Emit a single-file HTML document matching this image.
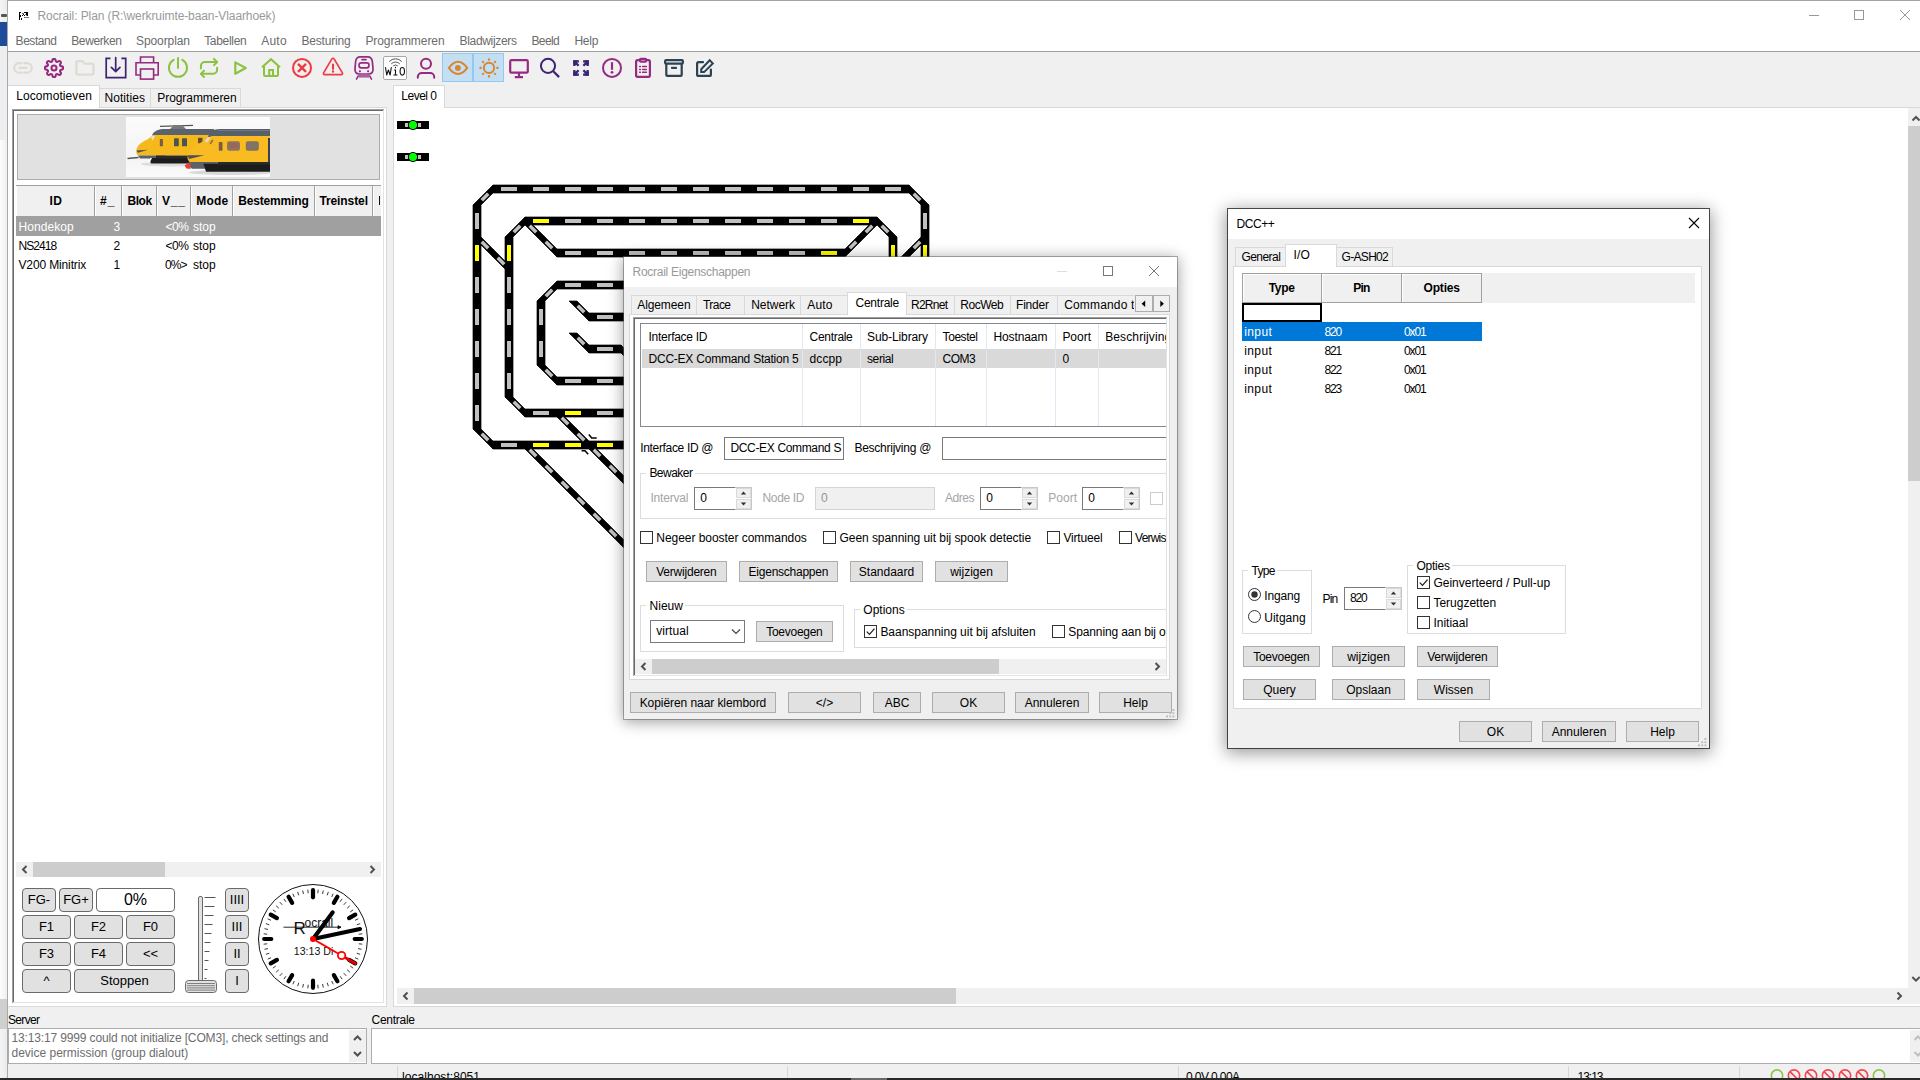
<!DOCTYPE html>
<html><head><meta charset="utf-8"><title>Rocrail</title>
<style>
html,body{margin:0;padding:0}
body{width:1920px;height:1080px;position:relative;overflow:hidden;background:#f0f0f0;font:12px "Liberation Sans",sans-serif;color:#000}
body div,body svg,body span.t{position:absolute}
span.t{white-space:pre}
.b{box-sizing:border-box}
</style></head>
<body>
<div style="left:0px;top:0px;width:8px;height:1078px;background:linear-gradient(90deg,#f4f4f5,#e9eaec);"></div>
<div style="left:0px;top:46px;width:8px;height:94px;background:#eceef0;"></div>
<div style="left:0px;top:140px;width:8px;height:860px;background:linear-gradient(90deg,#fdfdfd,#ededee);"></div>
<div style="left:0px;top:22px;width:7px;height:24px;background:#1d4c9b;"></div>
<div style="left:1px;top:14px;width:6px;height:3px;background:#555;border-radius:1px;"></div>
<div style="left:0px;top:999px;width:7px;height:30px;background:#cfcfcf;"></div>
<div style="left:7px;top:0px;width:1px;height:1078px;background:#a9a9a9;"></div>
<div style="left:8px;top:0px;width:1912px;height:1px;background:#a9a29f;"></div>
<div style="left:8px;top:1px;width:1912px;height:50px;background:#fff;"></div>
<div style="left:8px;top:51px;width:1912px;height:1px;background:#a0a0a0;"></div>
<svg style="left:18px;top:11px" width="12" height="10" viewBox="0 0 12 10" fill="#000"><rect x="1" y="1" width="2" height="1"/><rect x="6" y="1" width="4" height="1"/><rect x="1" y="2" width="1" height="1"/><rect x="4.300000000000001" y="2" width="1.2" height="1"/><rect x="8" y="2" width="2" height="1"/><rect x="1" y="3" width="1" height="1"/><rect x="5" y="3" width="1" height="1"/><rect x="7.5" y="3" width="2.5" height="1"/><rect x="1" y="4" width="2" height="1"/><rect x="4" y="4" width="1" height="1"/><rect x="6" y="4" width="1" height="1"/><rect x="8.5" y="4" width="1.5" height="1"/><rect x="1" y="5" width="2" height="1"/><rect x="1" y="6" width="1" height="1"/><rect x="1" y="7" width="1" height="1"/><rect x="3" y="7" width="1" height="1"/><rect x="1" y="8" width="1" height="1"/><rect x="3" y="8" width="1" height="1"/><rect x="6" y="6" width="5" height="1" fill="#777"/></svg>
<span class="t" id="t0" style="top:8px;line-height:16px;color:#999;left:37.50px;letter-spacing:-0.095px;">Rocrail: Plan (R:\werkruimte-baan-Vlaarhoek)</span>
<span class="t" id="t1" style="top:33px;line-height:16px;color:#6b6b6b;left:15.60px;letter-spacing:-0.458px;">Bestand</span>
<span class="t" id="t2" style="top:33px;line-height:16px;color:#6b6b6b;left:71.25px;letter-spacing:-0.389px;">Bewerken</span>
<span class="t" id="t3" style="top:33px;line-height:16px;color:#6b6b6b;left:136.00px;letter-spacing:-0.090px;">Spoorplan</span>
<span class="t" id="t4" style="top:33px;line-height:16px;color:#6b6b6b;left:204.20px;letter-spacing:-0.315px;">Tabellen</span>
<span class="t" id="t5" style="top:33px;line-height:16px;color:#6b6b6b;left:261.25px;letter-spacing:0.221px;">Auto</span>
<span class="t" id="t6" style="top:33px;line-height:16px;color:#6b6b6b;left:301.50px;letter-spacing:-0.200px;">Besturing</span>
<span class="t" id="t7" style="top:33px;line-height:16px;color:#6b6b6b;left:365.40px;letter-spacing:-0.076px;">Programmeren</span>
<span class="t" id="t8" style="top:33px;line-height:16px;color:#6b6b6b;left:459.60px;letter-spacing:-0.339px;">Bladwijzers</span>
<span class="t" id="t9" style="top:33px;line-height:16px;color:#6b6b6b;left:531.50px;letter-spacing:-0.651px;">Beeld</span>
<span class="t" id="t10" style="top:33px;line-height:16px;color:#6b6b6b;left:574.40px;letter-spacing:-0.196px;">Help</span>
<svg style="left:1800px;top:5px" width="120" height="22" viewBox="0 0 120 22" fill="none" stroke="#999" stroke-width="1"><path d="M9 10.5h10"/><rect x="54.5" y="5.5" width="9" height="9"/><path d="M100 5l10 10M110 5l-10 10"/></svg>
<div style="left:442px;top:53px;width:31px;height:29px;background:#c4def2;border:1px solid #90c8f6;box-sizing:border-box;"></div>
<div style="left:473px;top:53px;width:31px;height:29px;background:#c4def2;border:1px solid #90c8f6;box-sizing:border-box;"></div>
<svg style="left:10px;top:55px" width="26" height="26" viewBox="10 55 26 26" fill="none" stroke="#dedbd2" stroke-width="2.2" stroke-linecap="round" stroke-linejoin="round"><path d="M21.6 63.100H19a4.800 4.800 0 0 0 0 9.600h2.600M24.300 63.100H27a4.800 4.800 0 0 1 0 9.600h-2.700M19.400 67.900h7.300"/></svg>
<svg style="left:44px;top:57.900px" width="20" height="20" viewBox="0 0 24 24" fill="none" stroke="#962a80" stroke-width="2.500" stroke-linecap="round" stroke-linejoin="round"><circle cx="12" cy="12" r="3"/><path d="M19.4 15a1.650 1.650 0 0 0 .33 1.820l.06.06a2 2 0 1 1-2.830 2.830l-.06-.06a1.650 1.650 0 0 0-1.820-.33 1.650 1.650 0 0 0-1 1.510V21a2 2 0 0 1-4 0v-.09A1.650 1.650 0 0 0 9 19.400a1.650 1.650 0 0 0-1.820.33l-.06.06a2 2 0 1 1-2.830-2.830l.06-.06a1.650 1.650 0 0 0 .33-1.820 1.650 1.650 0 0 0-1.510-1H3a2 2 0 0 1 0-4h.09A1.650 1.650 0 0 0 4.600 9a1.650 1.650 0 0 0-.33-1.820l-.06-.06a2 2 0 1 1 2.830-2.830l.06.06a1.650 1.650 0 0 0 1.820.33H9a1.650 1.650 0 0 0 1-1.510V3a2 2 0 0 1 4 0v.09a1.650 1.650 0 0 0 1 1.510 1.650 1.650 0 0 0 1.820-.33l.06-.06a2 2 0 1 1 2.830 2.830l-.06.06a1.650 1.650 0 0 0-.33 1.820V9a1.650 1.650 0 0 0 1.510 1H21a2 2 0 0 1 0 4h-.09a1.650 1.650 0 0 0-1.510 1z"/></svg>
<svg style="left:72px;top:55px" width="26" height="26" viewBox="72 55 26 26" fill="none" stroke="#dedbd2" stroke-width="2.2" stroke-linecap="round" stroke-linejoin="round"><path d="M76.400 62.600a1.500 1.500 0 0 1 1.500-1.500h4.300l2.200 2.500h7.600a1.500 1.500 0 0 1 1.500 1.500v8a1.500 1.500 0 0 1-1.500 1.500H77.900a1.500 1.500 0 0 1-1.500-1.500z"/></svg>
<svg style="left:103px;top:55px" width="26" height="26" viewBox="103 55 26 26" fill="none" stroke="#3c2373" stroke-width="1.7" stroke-linecap="round" stroke-linejoin="round"><path d="M110.500 58.400h-4.300v19.200h19.500V58.400h-4.300" stroke-linejoin="miter" stroke-linecap="butt"/><path d="M115.700 57.700v13.500M111.400 67.400l4.300 4.200 4.300-4.200"/></svg>
<svg style="left:134px;top:55px" width="26" height="26" viewBox="134 55 26 26" fill="none" stroke="#962a80" stroke-width="1.6" stroke-linecap="round" stroke-linejoin="round"><g stroke-linejoin="miter" stroke-linecap="butt"><path d="M140.500 62.800V57h13.100v5.800"/><path d="M140.500 75H136V62.800h22.200V75h-4.600"/><rect x="140.500" y="69" width="13.100" height="10.100"/></g></svg>
<svg style="left:165px;top:55px" width="26" height="26" viewBox="165 55 26 26" fill="none" stroke="#8bc340" stroke-width="2" stroke-linecap="round" stroke-linejoin="round"><path d="M173.700 59.800a9.050 9.050 0 1 0 8.600 0"/><path d="M178 58.100v10"/></svg>
<svg style="left:196px;top:55px" width="26" height="26" viewBox="196 55 26 26" fill="none" stroke="#8bc340" stroke-width="2" stroke-linecap="round" stroke-linejoin="round"><path d="M214 58.900l3.100 3.100-3.100 3.100"/><path d="M200.900 68.400V66a4 4 0 0 1 4-4h12"/><path d="M204 77l-3.100-3.100 3.100-3.100"/><path d="M217.100 67.800v2a4 4 0 0 1-4 4h-12"/></svg>
<svg style="left:227px;top:55px" width="26" height="26" viewBox="227 55 26 26" fill="none" stroke="#8bc340" stroke-width="2.2" stroke-linecap="round" stroke-linejoin="round"><path d="M235.300 62.400l10.500 5.600-10.500 5.700z"/></svg>
<svg style="left:258px;top:55px" width="26" height="26" viewBox="258 55 26 26" fill="none" stroke="#8bc340" stroke-width="2" stroke-linecap="round" stroke-linejoin="round"><path d="M262 67.200l9-8 9 8" stroke-linecap="butt" stroke-linejoin="miter"/><path d="M264 66v9a1 1 0 0 0 1 1h12a1 1 0 0 0 1-1v-9"/><path d="M269.200 75.500v-5.400h3.800v5.400" stroke-linejoin="miter"/></svg>
<svg style="left:289px;top:55px" width="26" height="26" viewBox="289 55 26 26" fill="none" stroke="#ef3a42" stroke-width="2" stroke-linecap="round" stroke-linejoin="round"><circle cx="302" cy="67.900" r="9"/><path d="M298 63.900l8 8M306 63.900l-8 8" stroke-width="2.300" stroke-linecap="butt"/></svg>
<svg style="left:320px;top:55px" width="26" height="26" viewBox="320 55 26 26" fill="none" stroke="#ef3a42" stroke-width="1.7" stroke-linecap="round" stroke-linejoin="round"><path d="M331.900 58.900L323.600 72.900a1.200 1.200 0 0 0 1 1.800h16.800a1.200 1.200 0 0 0 1-1.800L334.100 58.900a1.250 1.250 0 0 0-2.200 0z"/><path d="M333 63.700v6" stroke-width="2.100" stroke-linecap="butt"/><path d="M333 71.500v.2" stroke-width="2.300"/></svg>
<svg style="left:351px;top:55px" width="26" height="26" viewBox="351 55 26 26" fill="none" stroke="#962a80" stroke-width="1.7" stroke-linecap="round" stroke-linejoin="round"><path d="M360.300 56.800h7.400c3.500 0 4.400 2 4.700 5l.6 7.200c.2 3-1.200 5-4.300 5h-9.400c-3.100 0-4.500-2-4.300-5l.6-7.200c.3-3 1.200-5 4.700-5z"/><rect x="359.100" y="62.800" width="9.800" height="5" rx="2"/><path d="M362 59.600h4"/><path d="M359.900 71.300v.01M368.100 71.300v.01" stroke-width="2.200"/><path d="M358.300 75.800l-1.800 3.400M369.700 75.800l1.800 3.400" stroke-width="1.500"/><path d="M358.300 75h11.400v2.600h-11.400z" fill="#a860a0" stroke="none"/></svg>
<svg style="left:383px;top:56px" width="24" height="24" viewBox="383 56 24 24"><rect x="383.500" y="56.500" width="23" height="23" rx="1.500" fill="#fff" stroke="#a8a8a8"/><g fill="none" stroke="#555" stroke-width="1" stroke-linecap="round"><path d="M389.500 61.300a8 8 0 0 1 12 0"/><path d="M391.500 63.600a5.500 5.500 0 0 1 8 0"/><path d="M393.500 65.700a3 3 0 0 1 4 0"/></g><g fill="none" stroke="#111" stroke-width="1.100" stroke-linejoin="round" stroke-linecap="round"><path d="M385.500 67.500l1.200 7.500 1.700-5 1.700 5 1.200-7.500"/><path d="M394.500 70h1v5M393.800 75h3.200M395.500 67.200v.5"/><ellipse cx="402.300" cy="71.300" rx="2.200" ry="3.800"/></g></svg>
<svg style="left:413px;top:55px" width="26" height="26" viewBox="413 55 26 26" fill="none" stroke="#962a80" stroke-width="2" stroke-linecap="round" stroke-linejoin="round"><path d="M417.800 77.700v-.7a4 4 0 0 1 4-4h8.400a4 4 0 0 1 4 4v.7"/><circle cx="426" cy="63.850" r="5"/></svg>
<svg style="left:444px;top:55px" width="26" height="26" viewBox="444 55 26 26" fill="none" stroke="#d8862e" stroke-width="2" stroke-linecap="round" stroke-linejoin="round"><path d="M448.900 67.900c3-4.300 6-6.100 9.100-6.100s6.200 1.800 9.200 6.100c-3 4.300-6.100 6.100-9.200 6.100s-6.100-1.800-9.100-6.100z" stroke-linejoin="miter"/><circle cx="457.900" cy="67.900" r="2.900" fill="#d8862e" stroke="none"/></svg>
<svg style="left:475px;top:55px" width="26" height="26" viewBox="475 55 26 26" fill="none" stroke="#d8862e" stroke-width="2" stroke-linecap="round" stroke-linejoin="round"><circle cx="489" cy="67.900" r="5.100"/><path d="M496.40 67.90L498.50 67.90M494.23 73.13L495.72 74.62M489.00 75.30L489.00 77.40M483.77 73.13L482.28 74.62M481.60 67.90L479.50 67.90M483.77 62.67L482.28 61.18M489.00 60.50L489.00 58.40M494.23 62.67L495.72 61.18" stroke-linecap="butt" stroke-width="2.100"/></svg>
<svg style="left:506px;top:55px" width="26" height="26" viewBox="506 55 26 26" fill="none" stroke="#962a80" stroke-width="2.2" stroke-linecap="round" stroke-linejoin="round"><rect x="510.200" y="60.200" width="17.600" height="12.500" rx="1.300"/><path d="M519 73v3.800M514.800 77.100h8.200" stroke-linecap="butt"/></svg>
<svg style="left:537px;top:55px" width="26" height="26" viewBox="537 55 26 26" fill="none" stroke="#3c2373" stroke-width="2" stroke-linecap="round" stroke-linejoin="round"><circle cx="548" cy="65.850" r="7.050"/><path d="M553.300 71.300l5.800 5.800" stroke-linecap="butt" stroke-width="2.200"/></svg>
<svg style="left:568px;top:55px" width="26" height="26" viewBox="568 55 26 26" fill="none" stroke="#3c2373" stroke-width="2" stroke-linecap="round" stroke-linejoin="round"><g stroke-linecap="butt" stroke-linejoin="miter" stroke-width="2.300"><path d="M574.350 66v-4.550h4.550M574.800 61.900l3.800 3.800M587.650 66v-4.550h-4.550M587.200 61.900l-3.800 3.800M574.350 70v4.550h4.550M574.800 74.100l3.800-3.800M587.650 70v4.550h-4.550M587.200 74.100l-3.800-3.800"/></g><path d="M573.200 60.300h4.500l-4.500 4.500zM588.800 60.300h-4.500l4.500 4.500zM573.200 75.700h4.500l-4.500-4.500zM588.800 75.700h-4.500l4.500-4.500z" fill="#3c2373" stroke="none"/></svg>
<svg style="left:599px;top:55px" width="26" height="26" viewBox="599 55 26 26" fill="none" stroke="#962a80" stroke-width="2" stroke-linecap="round" stroke-linejoin="round"><circle cx="612" cy="67.900" r="9"/><path d="M612 62.200v7.600" stroke-width="2.200" stroke-linecap="butt"/><path d="M612 72.300v.01" stroke-width="2.800"/></svg>
<svg style="left:630px;top:55px" width="26" height="26" viewBox="630 55 26 26" fill="none" stroke="#962a80" stroke-width="2.2" stroke-linecap="round" stroke-linejoin="round"><path d="M647 60.200h1.400a1.500 1.500 0 0 1 1.500 1.500v13.600a1.500 1.500 0 0 1-1.500 1.500h-10.800a1.500 1.500 0 0 1-1.500-1.500V61.700a1.500 1.500 0 0 1 1.500-1.500H639"/><rect x="640" y="58.900" width="6.100" height="2.700" rx=".8"/><path d="M639.600 66.400h.8M639.600 69.400h.8M639.600 72.300h.8M642.600 66.400h3.800M642.600 69.400h3.800M642.600 72.300h3.800" stroke-width="1.500"/></svg>
<svg style="left:661px;top:55px" width="26" height="26" viewBox="661 55 26 26" fill="none" stroke="#2b4352" stroke-width="2.2" stroke-linecap="round" stroke-linejoin="round"><rect x="665.100" y="60.200" width="17.800" height="3.500" rx="1"/><path d="M666.300 64.200v10.700a1 1 0 0 0 1 1h13.400a1 1 0 0 0 1-1V64.200"/><path d="M671.100 67.900h5.800" stroke-linecap="butt"/></svg>
<svg style="left:692px;top:55px" width="26" height="26" viewBox="692 55 26 26" fill="none" stroke="#2b4352" stroke-width="2.2" stroke-linecap="round" stroke-linejoin="round"><path d="M703 62.200h-4.400a1.500 1.500 0 0 0-1.500 1.500v10.700a1.500 1.500 0 0 0 1.500 1.500h10.800a1.500 1.500 0 0 0 1.500-1.500v-4.900" /><path d="M709.700 60.300l3.100 3.100-8.700 8.700h-2.900v-2.900z" stroke-linejoin="miter" stroke-width="2"/></svg>
<div style="left:8px;top:107px;width:379px;height:900px;background:#fff;border:1px solid #d9d9d9;box-sizing:border-box;border-left:none;"></div>
<div style="left:99px;top:88px;width:52px;height:20px;background:#f0f0f0;border:1px solid #d9d9d9;box-sizing:border-box;"></div>
<div style="left:150px;top:88px;width:91px;height:20px;background:#f0f0f0;border:1px solid #d9d9d9;box-sizing:border-box;"></div>
<div style="left:8px;top:85px;width:92px;height:23px;background:#fff;border:1px solid #d9d9d9;box-sizing:border-box;border-bottom:none;border-left:none;"></div>
<span class="t" id="t11" style="top:88px;line-height:16px;left:16.25px;letter-spacing:0.080px;">Locomotieven</span>
<span class="t" id="t12" style="top:90px;line-height:16px;left:104.40px;letter-spacing:0.083px;">Notities</span>
<span class="t" id="t13" style="top:90px;line-height:16px;left:157.25px;letter-spacing:-0.057px;">Programmeren</span>
<div style="left:12px;top:109px;width:373px;height:895px;background:#fff;"></div>
<div style="left:12px;top:109px;width:372px;height:894px;background:#a0a0a0;"></div>
<div style="left:13px;top:110px;width:371px;height:893px;background:#e3e3e3;"></div>
<div style="left:13px;top:110px;width:370px;height:892px;background:#696969;"></div>
<div style="left:14px;top:111px;width:369px;height:891px;background:#fff;"></div>
<div style="left:17px;top:114px;width:363px;height:66px;background:#e1e1e1;border:1px solid #adadad;box-sizing:border-box;"></div>
<svg style="left:126px;top:117px" width="144" height="60" viewBox="0 0 144 60">
<defs><linearGradient id="bgI" x1="0" y1="0" x2="0" y2="1"><stop offset="0" stop-color="#fbfbfb"/><stop offset=".7" stop-color="#f4f4f4"/><stop offset="1" stop-color="#fafafa"/></linearGradient>
<filter id="bl"><feGaussianBlur stdDeviation=".45"/></filter></defs>
<rect width="144" height="60" fill="url(#bgI)"/>
<g filter="url(#bl)">
<ellipse cx="45" cy="47" rx="30" ry="2.500" fill="#ddd"/><ellipse cx="105" cy="55.500" rx="42" ry="2.500" fill="#d8d8d8"/>
<!-- back train -->
<path d="M34 9.300L67 8.300" stroke="#5a5548" stroke-width="1.200"/><path d="M44 12l4-4h8l4 4z" fill="#777a7c"/>
<path d="M26 18.500c1-4 6-6.500 12-6.500h50v7z" fill="#5c646d"/>
<path d="M10.300 34c0-5 5-9 11-11.500l6-4.500h60v20.500H12c-1.500-1-1.700-3-1.700-4.500z" fill="#f6b91f"/>
<path d="M10.500 33.500l11.500-.7-10 3z" fill="#4a5058"/>
<path d="M12 38.500h28l-2 3H14z" fill="#5a6068"/><path d="M23 41h44v5.500H25z" fill="#1e1e1e"/><path d="M30 38.500h38v3H30z" fill="#2a2a2a"/>
<path d="M1.500 41.500l11-1" stroke="#555" stroke-width="1.300"/><path d="M21 45l3-4h2l-2 4z" fill="#fff"/>
<rect x="33.800" y="22" width="3.100" height="7.200" rx=".5" fill="#7a5a46"/><rect x="48" y="21.300" width="4.800" height="8" rx=".5" fill="#4a5450"/><rect x="56" y="21.300" width="5" height="8" rx=".5" fill="#4a5450"/><rect x="72" y="20.800" width="4.500" height="5.500" fill="#6a4a38"/>
<path d="M25 20l2.500-1.500 1.500 1-2.500 4z" fill="#e8e4d8"/>
<!-- front train -->
<path d="M82 20c1-5 5-8 12-8h50v9z" fill="#59616b"/><path d="M92 13.500h52" stroke="#747c86" stroke-width=".8"/>
<path d="M61.500 40c0-5 3-9 10-12l10.500-7.500 4-1.500h58v26H63.500c-1.500-1.500-2-3-2-5z" fill="#f8bc20"/>
<path d="M142 21h2v25h-2z" fill="#3a4048"/>
<path d="M61.500 38.300h17l-15.500 3.700z" fill="#4a5058"/>
<path d="M62.500 45h30l-3 6.700H66c-2.500-1.500-3.500-4-3.500-6.700z" fill="#5b6068"/>
<path d="M77.500 46.700H144v8H80z" fill="#1c1c1c"/><path d="M92 45h52v2.500H92z" fill="#2b2b2b"/>
<path d="M58.500 48.500l4-2.500 3 1.500-1.500 2 .5 2.500-4-.5z" fill="#e7413b"/>
<rect x="92.800" y="25" width="3.700" height="8.800" rx=".8" fill="#7b5b40"/>
<rect x="101" y="24.200" width="13" height="9.500" rx="2.200" fill="#8d7463"/><rect x="119.800" y="24.200" width="13" height="9.500" rx="2.200" fill="#86705f"/>
<path d="M103 26h9v5h-9z" fill="#a05a48" opacity=".5"/><path d="M122 26h9v5h-9z" fill="#7a7a78" opacity=".5"/>
<path d="M78.500 24l3.500-4 2.500.5-3 5z" fill="#ded9cc"/><path d="M83.500 26.500l2.500-4 1.500.8-2.500 4.200z" fill="#9c6b4a"/>
</g></svg>
<div style="left:16px;top:185px;width:365px;height:32px;background:#f0f0f0;"></div>
<div style="left:16px;top:185px;width:365px;height:1px;background:#a0a0a0;"></div>
<div style="left:16px;top:216px;width:365px;height:1px;background:#a0a0a0;"></div>
<div style="left:94px;top:186px;width:1px;height:30px;background:#a0a0a0;"></div>
<div style="left:95px;top:186px;width:1px;height:30px;background:#fff;"></div>
<div style="left:121px;top:186px;width:1px;height:30px;background:#a0a0a0;"></div>
<div style="left:122px;top:186px;width:1px;height:30px;background:#fff;"></div>
<div style="left:156px;top:186px;width:1px;height:30px;background:#a0a0a0;"></div>
<div style="left:157px;top:186px;width:1px;height:30px;background:#fff;"></div>
<div style="left:190px;top:186px;width:1px;height:30px;background:#a0a0a0;"></div>
<div style="left:191px;top:186px;width:1px;height:30px;background:#fff;"></div>
<div style="left:232px;top:186px;width:1px;height:30px;background:#a0a0a0;"></div>
<div style="left:233px;top:186px;width:1px;height:30px;background:#fff;"></div>
<div style="left:314px;top:186px;width:1px;height:30px;background:#a0a0a0;"></div>
<div style="left:315px;top:186px;width:1px;height:30px;background:#fff;"></div>
<div style="left:372px;top:186px;width:1px;height:30px;background:#a0a0a0;"></div>
<div style="left:373px;top:186px;width:1px;height:30px;background:#fff;"></div>
<div style="left:16px;top:186px;width:1px;height:30px;background:#fff;"></div>
<span class="t" id="t14" style="top:193px;line-height:16px;font-weight:bold;left:49.40px;letter-spacing:0.500px;">ID</span>
<span class="t" id="t15" style="top:193px;line-height:16px;font-weight:bold;left:100.00px;letter-spacing:1.200px;">#_</span>
<span class="t" id="t16" style="top:193px;line-height:16px;font-weight:bold;left:127.50px;letter-spacing:-0.472px;">Blok</span>
<span class="t" id="t17" style="top:193px;line-height:16px;font-weight:bold;left:161.90px;letter-spacing:0.870px;">V__</span>
<span class="t" id="t18" style="top:193px;line-height:16px;font-weight:bold;left:196.25px;letter-spacing:0.169px;">Mode</span>
<span class="t" id="t19" style="top:193px;line-height:16px;font-weight:bold;left:238.30px;letter-spacing:-0.176px;">Bestemming</span>
<span class="t" id="t20" style="top:193px;line-height:16px;font-weight:bold;left:319.40px;letter-spacing:-0.095px;">Treinstel</span>
<div style="left:378.5px;top:196.3px;width:1.8px;height:8.7px;background:#111;"></div>
<div style="left:16px;top:216px;width:365px;height:20px;background:#a0a0a0;"></div>
<span class="t" id="t21" style="top:219px;line-height:16px;color:#fff;left:18.50px;letter-spacing:0.076px;">Hondekop</span>
<span class="t" id="t22" style="top:219px;line-height:16px;color:#fff;left:113.61px;">3</span>
<span class="t" id="t23" style="top:219px;line-height:16px;color:#fff;left:165.60px;letter-spacing:-0.480px;">&lt;0%</span>
<span class="t" id="t24" style="top:219px;line-height:16px;color:#fff;left:193.00px;letter-spacing:-0.029px;">stop</span>
<span class="t" id="t25" style="top:238px;line-height:16px;left:18.50px;letter-spacing:-0.955px;">NS2418</span>
<span class="t" id="t26" style="top:238px;line-height:16px;left:113.61px;">2</span>
<span class="t" id="t27" style="top:238px;line-height:16px;left:165.60px;letter-spacing:-0.480px;">&lt;0%</span>
<span class="t" id="t28" style="top:238px;line-height:16px;left:193.00px;letter-spacing:-0.029px;">stop</span>
<span class="t" id="t29" style="top:257px;line-height:16px;left:18.50px;letter-spacing:-0.134px;">V200 Minitrix</span>
<span class="t" id="t30" style="top:257px;line-height:16px;left:113.61px;">1</span>
<span class="t" id="t31" style="top:257px;line-height:16px;left:165.00px;letter-spacing:-0.930px;">0%&gt;</span>
<span class="t" id="t32" style="top:257px;line-height:16px;left:193.00px;letter-spacing:-0.029px;">stop</span>
<div style="left:16px;top:862px;width:365px;height:15px;background:#f0f0f0;"></div>
<div style="left:33px;top:862px;width:132px;height:15px;background:#cdcdcd;"></div>
<svg style="left:16px;top:862px" width="365" height="15" fill="none" stroke="#505050" stroke-width="2"><path d="M10.5 4.0l-3.500 3.500 3.500 3.500M354.5 4.0l3.500 3.500-3.500 3.500"/></svg>
<div style="left:22px;top:888px;width:34px;height:24px;background:#e1e1e1;border:1px solid #6a6a6a;box-sizing:border-box;border-radius:4px;"></div>
<span class="t" id="t33" style="top:891px;line-height:17px;font-size:13px;left:27.80px;">FG-</span>
<div style="left:59px;top:888px;width:34px;height:24px;background:#e1e1e1;border:1px solid #6a6a6a;box-sizing:border-box;border-radius:4px;"></div>
<span class="t" id="t34" style="top:891px;line-height:17px;font-size:13px;left:63.17px;">FG+</span>
<div style="left:96px;top:888px;width:79px;height:24px;background:#fff;border:1px solid #6a6a6a;box-sizing:border-box;border-radius:4px;"></div>
<span class="t" id="t35" style="top:889px;line-height:21px;font-size:16px;left:123.94px;">0%</span>
<div style="left:22px;top:915px;width:49px;height:24px;background:#e1e1e1;border:1px solid #6a6a6a;box-sizing:border-box;border-radius:4px;"></div>
<span class="t" id="t36" style="top:918px;line-height:17px;font-size:13px;left:38.91px;">F1</span>
<div style="left:74px;top:915px;width:49px;height:24px;background:#e1e1e1;border:1px solid #6a6a6a;box-sizing:border-box;border-radius:4px;"></div>
<span class="t" id="t37" style="top:918px;line-height:17px;font-size:13px;left:90.91px;">F2</span>
<div style="left:126px;top:915px;width:49px;height:24px;background:#e1e1e1;border:1px solid #6a6a6a;box-sizing:border-box;border-radius:4px;"></div>
<span class="t" id="t38" style="top:918px;line-height:17px;font-size:13px;left:142.91px;">F0</span>
<div style="left:22px;top:942px;width:49px;height:24px;background:#e1e1e1;border:1px solid #6a6a6a;box-sizing:border-box;border-radius:4px;"></div>
<span class="t" id="t39" style="top:945px;line-height:17px;font-size:13px;left:38.91px;">F3</span>
<div style="left:74px;top:942px;width:49px;height:24px;background:#e1e1e1;border:1px solid #6a6a6a;box-sizing:border-box;border-radius:4px;"></div>
<span class="t" id="t40" style="top:945px;line-height:17px;font-size:13px;left:90.91px;">F4</span>
<div style="left:126px;top:942px;width:49px;height:24px;background:#e1e1e1;border:1px solid #6a6a6a;box-sizing:border-box;border-radius:4px;"></div>
<span class="t" id="t41" style="top:945px;line-height:17px;font-size:13px;left:142.91px;">&lt;&lt;</span>
<div style="left:22px;top:969px;width:49px;height:24px;background:#e1e1e1;border:1px solid #6a6a6a;box-sizing:border-box;border-radius:4px;"></div>
<span class="t" id="t42" style="top:972px;line-height:17px;font-size:13px;left:43.45px;">^</span>
<div style="left:74px;top:969px;width:101px;height:24px;background:#e1e1e1;border:1px solid #6a6a6a;box-sizing:border-box;border-radius:4px;"></div>
<span class="t" id="t43" style="top:972px;line-height:17px;font-size:13px;left:100.28px;">Stoppen</span>
<div style="left:225px;top:888px;width:24px;height:24px;background:#e1e1e1;border:1px solid #6a6a6a;box-sizing:border-box;border-radius:4px;"></div>
<span class="t" id="t44" style="top:891px;line-height:17px;font-size:13px;left:229.77px;">IIII</span>
<div style="left:225px;top:915px;width:24px;height:24px;background:#e1e1e1;border:1px solid #6a6a6a;box-sizing:border-box;border-radius:4px;"></div>
<span class="t" id="t45" style="top:918px;line-height:17px;font-size:13px;left:231.58px;">III</span>
<div style="left:225px;top:942px;width:24px;height:24px;background:#e1e1e1;border:1px solid #6a6a6a;box-sizing:border-box;border-radius:4px;"></div>
<span class="t" id="t46" style="top:945px;line-height:17px;font-size:13px;left:233.38px;">II</span>
<div style="left:225px;top:969px;width:24px;height:24px;background:#e1e1e1;border:1px solid #6a6a6a;box-sizing:border-box;border-radius:4px;"></div>
<span class="t" id="t47" style="top:972px;line-height:17px;font-size:13px;left:235.19px;">I</span>
<svg style="left:184px;top:894px" width="36" height="100" viewBox="184 894 36 100"><rect x="198.500" y="896.500" width="4" height="85" rx="1.500" fill="#e1e1e1" stroke="#6a6a6a"/><path d="M204.500 897.5h11.0" stroke="#555" stroke-width="1"/><path d="M204.500 906.5h10.0" stroke="#555" stroke-width="1"/><path d="M204.500 915.5h9.0" stroke="#555" stroke-width="1"/><path d="M204.500 924.5h8.0" stroke="#555" stroke-width="1"/><path d="M204.500 933.5h7.0" stroke="#555" stroke-width="1"/><path d="M204.500 942.5h6.0" stroke="#555" stroke-width="1"/><path d="M204.500 951.5h5.0" stroke="#555" stroke-width="1"/><path d="M204.500 960.5h4.0" stroke="#555" stroke-width="1"/><path d="M204.500 969.5h3.0" stroke="#555" stroke-width="1"/><path d="M204.500 978.5h2.0" stroke="#555" stroke-width="1"/><rect x="185.500" y="980.500" width="31" height="12" rx="3" fill="#e1e1e1" stroke="#6a6a6a"/><path d="M187 983.5h28" stroke="#666" stroke-width=".8"/><path d="M187 985.7h28" stroke="#666" stroke-width=".8"/><path d="M187 987.9h28" stroke="#666" stroke-width=".8"/><path d="M187 990.1h28" stroke="#666" stroke-width=".8"/></svg>
<svg style="left:256px;top:882px" width="114" height="114" viewBox="256 882 114 114"><circle cx="313" cy="939" r="54.5" fill="#fff" stroke="#111" stroke-width="1"/><path d="M313.00 897.30L313.00 890.20" stroke="#000" stroke-width="4.200" stroke-linecap="round"/><path d="M317.81 893.25L318.18 889.67" stroke="#222" stroke-width=".9"/><path d="M322.56 894.01L323.31 890.48" stroke="#222" stroke-width=".9"/><path d="M327.21 895.25L328.33 891.83" stroke="#222" stroke-width=".9"/><path d="M331.71 896.98L333.17 893.69" stroke="#222" stroke-width=".9"/><path d="M333.85 902.89L337.40 896.74" stroke="#000" stroke-width="4.200" stroke-linecap="round"/><path d="M340.04 901.79L342.15 898.87" stroke="#222" stroke-width=".9"/><path d="M343.78 904.82L346.19 902.14" stroke="#222" stroke-width=".9"/><path d="M347.18 908.22L349.86 905.81" stroke="#222" stroke-width=".9"/><path d="M350.21 911.96L353.13 909.85" stroke="#222" stroke-width=".9"/><path d="M349.11 918.15L355.26 914.60" stroke="#000" stroke-width="4.200" stroke-linecap="round"/><path d="M355.02 920.29L358.31 918.83" stroke="#222" stroke-width=".9"/><path d="M356.75 924.79L360.17 923.67" stroke="#222" stroke-width=".9"/><path d="M357.99 929.44L361.52 928.69" stroke="#222" stroke-width=".9"/><path d="M358.75 934.19L362.33 933.82" stroke="#222" stroke-width=".9"/><path d="M354.70 939.00L361.80 939.00" stroke="#000" stroke-width="4.200" stroke-linecap="round"/><path d="M358.75 943.81L362.33 944.18" stroke="#222" stroke-width=".9"/><path d="M357.99 948.56L361.52 949.31" stroke="#222" stroke-width=".9"/><path d="M356.75 953.21L360.17 954.33" stroke="#222" stroke-width=".9"/><path d="M355.02 957.71L358.31 959.17" stroke="#222" stroke-width=".9"/><path d="M349.11 959.85L355.26 963.40" stroke="#000" stroke-width="4.200" stroke-linecap="round"/><path d="M350.21 966.04L353.13 968.15" stroke="#222" stroke-width=".9"/><path d="M347.18 969.78L349.86 972.19" stroke="#222" stroke-width=".9"/><path d="M343.78 973.18L346.19 975.86" stroke="#222" stroke-width=".9"/><path d="M340.04 976.21L342.15 979.13" stroke="#222" stroke-width=".9"/><path d="M333.85 975.11L337.40 981.26" stroke="#000" stroke-width="4.200" stroke-linecap="round"/><path d="M331.71 981.02L333.17 984.31" stroke="#222" stroke-width=".9"/><path d="M327.21 982.75L328.33 986.17" stroke="#222" stroke-width=".9"/><path d="M322.56 983.99L323.31 987.52" stroke="#222" stroke-width=".9"/><path d="M317.81 984.75L318.18 988.33" stroke="#222" stroke-width=".9"/><path d="M313.00 980.70L313.00 987.80" stroke="#000" stroke-width="4.200" stroke-linecap="round"/><path d="M308.19 984.75L307.82 988.33" stroke="#222" stroke-width=".9"/><path d="M303.44 983.99L302.69 987.52" stroke="#222" stroke-width=".9"/><path d="M298.79 982.75L297.67 986.17" stroke="#222" stroke-width=".9"/><path d="M294.29 981.02L292.83 984.31" stroke="#222" stroke-width=".9"/><path d="M292.15 975.11L288.60 981.26" stroke="#000" stroke-width="4.200" stroke-linecap="round"/><path d="M285.96 976.21L283.85 979.13" stroke="#222" stroke-width=".9"/><path d="M282.22 973.18L279.81 975.86" stroke="#222" stroke-width=".9"/><path d="M278.82 969.78L276.14 972.19" stroke="#222" stroke-width=".9"/><path d="M275.79 966.04L272.87 968.15" stroke="#222" stroke-width=".9"/><path d="M276.89 959.85L270.74 963.40" stroke="#000" stroke-width="4.200" stroke-linecap="round"/><path d="M270.98 957.71L267.69 959.17" stroke="#222" stroke-width=".9"/><path d="M269.25 953.21L265.83 954.33" stroke="#222" stroke-width=".9"/><path d="M268.01 948.56L264.48 949.31" stroke="#222" stroke-width=".9"/><path d="M267.25 943.81L263.67 944.18" stroke="#222" stroke-width=".9"/><path d="M271.30 939.00L264.20 939.00" stroke="#000" stroke-width="4.200" stroke-linecap="round"/><path d="M267.25 934.19L263.67 933.82" stroke="#222" stroke-width=".9"/><path d="M268.01 929.44L264.48 928.69" stroke="#222" stroke-width=".9"/><path d="M269.25 924.79L265.83 923.67" stroke="#222" stroke-width=".9"/><path d="M270.98 920.29L267.69 918.83" stroke="#222" stroke-width=".9"/><path d="M276.89 918.15L270.74 914.60" stroke="#000" stroke-width="4.200" stroke-linecap="round"/><path d="M275.79 911.96L272.87 909.85" stroke="#222" stroke-width=".9"/><path d="M278.82 908.22L276.14 905.81" stroke="#222" stroke-width=".9"/><path d="M282.22 904.82L279.81 902.14" stroke="#222" stroke-width=".9"/><path d="M285.96 901.79L283.85 898.87" stroke="#222" stroke-width=".9"/><path d="M292.15 902.89L288.60 896.74" stroke="#000" stroke-width="4.200" stroke-linecap="round"/><path d="M294.29 896.98L292.83 893.69" stroke="#222" stroke-width=".9"/><path d="M298.79 895.25L297.67 891.83" stroke="#222" stroke-width=".9"/><path d="M303.44 894.01L302.69 890.48" stroke="#222" stroke-width=".9"/><path d="M308.19 893.25L307.82 889.67" stroke="#222" stroke-width=".9"/><text x="293.500" y="933.500" font-size="17" font-family="Liberation Sans" fill="#111">R</text><text x="304.500" y="927" font-size="12" font-family="Liberation Sans" fill="#111">ocrail</text><path d="M283.500 927.200h57.500l-3-1.500v3l3-1.500" stroke="#111" stroke-width=".9" fill="#111"/><text x="293.800" y="954.800" font-size="10.600" font-family="Liberation Sans" fill="#111">13:13 Di</text><path d="M313.00 939.00L332.63 912.47" stroke="#000" stroke-width="4.2" stroke-linecap="round"/><path d="M313.00 939.00L359.95 929.02" stroke="#000" stroke-width="4.2" stroke-linecap="round"/><path d="M313 939L338.11 953.50" stroke="#f00" stroke-width="2"/><path d="M345.04 957.50L356.30 964.00" stroke="#e80000" stroke-width="2.800"/><circle cx="341.58" cy="955.50" r="3.700" fill="#fff" stroke="#f00" stroke-width="1.800"/><circle cx="313" cy="939" r="3" fill="#f00"/></svg>
<div style="left:393px;top:107px;width:1527px;height:900px;background:#fff;border:1px solid #d9d9d9;box-sizing:border-box;border-right:none;"></div>
<div style="left:393px;top:85px;width:52px;height:23px;background:#fff;border:1px solid #d9d9d9;box-sizing:border-box;border-bottom:none;"></div>
<span class="t" id="t48" style="top:88px;line-height:16px;left:401.30px;letter-spacing:-0.501px;">Level 0</span>
<div style="left:1908px;top:108px;width:12px;height:880px;background:#f0f0f0;"></div>
<div style="left:1908px;top:126px;width:12px;height:355px;background:#cdcdcd;"></div>
<svg style="left:1908px;top:108px" width="12" height="880" fill="none" stroke="#505050" stroke-width="2"><path d="M4.500 12.500l3.500-3.500 3.500 3.500M4.300 869l3.700 3.700 3.700-3.700"/></svg>
<div style="left:397px;top:988px;width:1511px;height:16px;background:#f0f0f0;"></div>
<div style="left:414px;top:988px;width:542px;height:16px;background:#cdcdcd;"></div>
<svg style="left:397px;top:988px" width="1511" height="16" fill="none" stroke="#505050" stroke-width="2"><path d="M10.5 4.5l-3.500 3.500 3.500 3.500M1500.5 4.5l3.500 3.500-3.500 3.500"/></svg>
<div style="left:1908px;top:988px;width:12px;height:16px;background:#f0f0f0;"></div>
<svg style="left:394px;top:108px" width="1514" height="880" viewBox="394 108 1514 880"><path d="M473 205L493 185L493 193L481 205zM493 185h32v8h-32zM525 185h32v8h-32zM557 185h32v8h-32zM589 185h32v8h-32zM621 185h32v8h-32zM653 185h32v8h-32zM685 185h32v8h-32zM717 185h32v8h-32zM749 185h32v8h-32zM781 185h32v8h-32zM813 185h32v8h-32zM845 185h32v8h-32zM877 185h32v8h-32zM909 185L929 205L921 205L909 193zM921 205h8v32h-8zM921 237h8v32h-8zM921 237L929 237L909 257L909 249zM921 269h8v32h-8zM921 301h8v32h-8zM921 333h8v32h-8zM921 365h8v32h-8zM921 397h8v32h-8zM473 205h8v32h-8zM473 237h8v32h-8zM473 237L481 237L493 249L493 257zM473 269h8v32h-8zM473 301h8v32h-8zM473 333h8v32h-8zM473 365h8v32h-8zM473 397h8v32h-8zM473 429L481 429L493 441L493 449zM493 441h32v8h-32zM525 441h32v8h-32zM525 441L545 461L537 461L525 449zM557 441h32v8h-32zM569 429L577 429L589 441L589 449zM589 441h32v8h-32zM589 441L609 461L601 461L589 449zM621 441h32v8h-32zM505 237L525 217L525 225L513 237zM525 217h32v8h-32zM525 217L545 237L537 237L525 225zM557 217h32v8h-32zM589 217h32v8h-32zM621 217h32v8h-32zM653 217h32v8h-32zM685 217h32v8h-32zM717 217h32v8h-32zM749 217h32v8h-32zM781 217h32v8h-32zM813 217h32v8h-32zM845 217h32v8h-32zM857 237L877 217L877 225L865 237zM877 217L897 237L889 237L877 225zM889 237h8v32h-8zM889 269L909 249L909 257L897 269zM505 237h8v32h-8zM493 249L513 269L505 269L493 257zM505 269h8v32h-8zM505 301h8v32h-8zM505 333h8v32h-8zM505 365h8v32h-8zM505 397L513 397L525 409L525 417zM525 409h32v8h-32zM557 409h32v8h-32zM557 409L577 429L569 429L557 417zM589 409h32v8h-32zM621 409h32v8h-32zM537 237L545 237L557 249L557 257zM557 249h32v8h-32zM589 249h32v8h-32zM621 249h32v8h-32zM653 249h32v8h-32zM685 249h32v8h-32zM717 249h32v8h-32zM749 249h32v8h-32zM781 249h32v8h-32zM813 249h32v8h-32zM857 237L865 237L845 257L845 249zM537 301L557 281L557 289L545 301zM557 281h32v8h-32zM589 281h32v8h-32zM621 281h32v8h-32zM537 301h8v32h-8zM537 333h8v32h-8zM537 365L545 365L557 377L557 385zM557 377h32v8h-32zM589 377h32v8h-32zM621 377h32v8h-32zM569 301L577 301L589 313L589 321zM589 313h32v8h-32zM621 313h32v8h-32zM569 333L577 333L589 345L589 353zM589 345h32v8h-32zM621 345L641 365L633 365L621 353zM537 461L545 461L557 473L557 481zM557 473L577 493L569 493L557 481zM569 493L577 493L589 505L589 513zM589 505L609 525L601 525L589 513zM601 525L609 525L621 537L621 545zM621 537L641 557L633 557L621 545zM601 461L609 461L621 473L621 481zM621 473L641 493L633 493L621 481z" fill="#000" stroke="#000" stroke-width=".7" stroke-linejoin="miter"/><rect x="480.4" y="195.25" width="9.2" height="3.5" fill="#c0c0c0" transform="rotate(-45 485 197)"/><rect x="501" y="187" width="16" height="4" fill="#c0c0c0"/><rect x="533" y="187" width="16" height="4" fill="#c0c0c0"/><rect x="565" y="187" width="16" height="4" fill="#c0c0c0"/><rect x="597" y="187" width="16" height="4" fill="#c0c0c0"/><rect x="629" y="187" width="16" height="4" fill="#c0c0c0"/><rect x="661" y="187" width="16" height="4" fill="#c0c0c0"/><rect x="693" y="187" width="16" height="4" fill="#c0c0c0"/><rect x="725" y="187" width="16" height="4" fill="#c0c0c0"/><rect x="757" y="187" width="16" height="4" fill="#c0c0c0"/><rect x="789" y="187" width="16" height="4" fill="#c0c0c0"/><rect x="821" y="187" width="16" height="4" fill="#c0c0c0"/><rect x="853" y="187" width="16" height="4" fill="#c0c0c0"/><rect x="885" y="187" width="16" height="4" fill="#c0c0c0"/><rect x="912.4" y="195.25" width="9.2" height="3.5" fill="#c0c0c0" transform="rotate(45 917 197)"/><rect x="923" y="213" width="4" height="16" fill="#c0c0c0"/><rect x="923" y="245" width="4" height="16" fill="#ffff00"/><rect x="912.4" y="243.25" width="9.2" height="3.5" fill="#c0c0c0" transform="rotate(-45 917 245)"/><rect x="923" y="277" width="4" height="16" fill="#c0c0c0"/><rect x="923" y="309" width="4" height="16" fill="#c0c0c0"/><rect x="923" y="341" width="4" height="16" fill="#c0c0c0"/><rect x="923" y="373" width="4" height="16" fill="#c0c0c0"/><rect x="923" y="405" width="4" height="16" fill="#c0c0c0"/><rect x="475" y="213" width="4" height="16" fill="#c0c0c0"/><rect x="475" y="245" width="4" height="16" fill="#ffff00"/><rect x="480.4" y="243.25" width="9.2" height="3.5" fill="#c0c0c0" transform="rotate(45 485 245)"/><rect x="475" y="277" width="4" height="16" fill="#c0c0c0"/><rect x="475" y="309" width="4" height="16" fill="#c0c0c0"/><rect x="475" y="341" width="4" height="16" fill="#c0c0c0"/><rect x="475" y="373" width="4" height="16" fill="#c0c0c0"/><rect x="475" y="405" width="4" height="16" fill="#c0c0c0"/><rect x="480.4" y="435.25" width="9.2" height="3.5" fill="#c0c0c0" transform="rotate(45 485 437)"/><rect x="501" y="443" width="16" height="4" fill="#c0c0c0"/><rect x="533" y="443" width="16" height="4" fill="#ffff00"/><rect x="528.4" y="451.25" width="9.2" height="3.5" fill="#c0c0c0" transform="rotate(45 533 453)"/><rect x="565" y="443" width="16" height="4" fill="#ffff00"/><rect x="576.4" y="435.25" width="9.2" height="3.5" fill="#c0c0c0" transform="rotate(45 581 437)"/><rect x="597" y="443" width="16" height="4" fill="#ffff00"/><rect x="592.4" y="451.25" width="9.2" height="3.5" fill="#c0c0c0" transform="rotate(45 597 453)"/><rect x="629" y="443" width="16" height="4" fill="#c0c0c0"/><rect x="512.4" y="227.25" width="9.2" height="3.5" fill="#c0c0c0" transform="rotate(-45 517 229)"/><rect x="533" y="219" width="16" height="4" fill="#ffff00"/><rect x="528.4" y="227.25" width="9.2" height="3.5" fill="#c0c0c0" transform="rotate(45 533 229)"/><rect x="565" y="219" width="16" height="4" fill="#c0c0c0"/><rect x="597" y="219" width="16" height="4" fill="#c0c0c0"/><rect x="629" y="219" width="16" height="4" fill="#c0c0c0"/><rect x="661" y="219" width="16" height="4" fill="#c0c0c0"/><rect x="693" y="219" width="16" height="4" fill="#c0c0c0"/><rect x="725" y="219" width="16" height="4" fill="#c0c0c0"/><rect x="757" y="219" width="16" height="4" fill="#c0c0c0"/><rect x="789" y="219" width="16" height="4" fill="#c0c0c0"/><rect x="821" y="219" width="16" height="4" fill="#c0c0c0"/><rect x="853" y="219" width="16" height="4" fill="#ffff00"/><rect x="864.4" y="227.25" width="9.2" height="3.5" fill="#c0c0c0" transform="rotate(-45 869 229)"/><rect x="880.4" y="227.25" width="9.2" height="3.5" fill="#c0c0c0" transform="rotate(45 885 229)"/><rect x="891" y="245" width="4" height="16" fill="#ffff00"/><rect x="896.4" y="259.25" width="9.2" height="3.5" fill="#c0c0c0" transform="rotate(-45 901 261)"/><rect x="507" y="245" width="4" height="16" fill="#ffff00"/><rect x="496.4" y="259.25" width="9.2" height="3.5" fill="#c0c0c0" transform="rotate(45 501 261)"/><rect x="507" y="277" width="4" height="16" fill="#c0c0c0"/><rect x="507" y="309" width="4" height="16" fill="#c0c0c0"/><rect x="507" y="341" width="4" height="16" fill="#c0c0c0"/><rect x="507" y="373" width="4" height="16" fill="#c0c0c0"/><rect x="512.4" y="403.25" width="9.2" height="3.5" fill="#c0c0c0" transform="rotate(45 517 405)"/><rect x="533" y="411" width="16" height="4" fill="#c0c0c0"/><rect x="565" y="411" width="16" height="4" fill="#ffff00"/><rect x="560.4" y="419.25" width="9.2" height="3.5" fill="#c0c0c0" transform="rotate(45 565 421)"/><rect x="597" y="411" width="16" height="4" fill="#c0c0c0"/><rect x="629" y="411" width="16" height="4" fill="#c0c0c0"/><rect x="544.4" y="243.25" width="9.2" height="3.5" fill="#c0c0c0" transform="rotate(45 549 245)"/><rect x="565" y="251" width="16" height="4" fill="#c0c0c0"/><rect x="597" y="251" width="16" height="4" fill="#c0c0c0"/><rect x="629" y="251" width="16" height="4" fill="#c0c0c0"/><rect x="661" y="251" width="16" height="4" fill="#c0c0c0"/><rect x="693" y="251" width="16" height="4" fill="#c0c0c0"/><rect x="725" y="251" width="16" height="4" fill="#c0c0c0"/><rect x="757" y="251" width="16" height="4" fill="#c0c0c0"/><rect x="789" y="251" width="16" height="4" fill="#c0c0c0"/><rect x="821" y="251" width="16" height="4" fill="#ffff00"/><rect x="848.4" y="243.25" width="9.2" height="3.5" fill="#c0c0c0" transform="rotate(-45 853 245)"/><rect x="544.4" y="291.25" width="9.2" height="3.5" fill="#c0c0c0" transform="rotate(-45 549 293)"/><rect x="565" y="283" width="16" height="4" fill="#c0c0c0"/><rect x="597" y="283" width="16" height="4" fill="#c0c0c0"/><rect x="629" y="283" width="16" height="4" fill="#c0c0c0"/><rect x="539" y="309" width="4" height="16" fill="#c0c0c0"/><rect x="539" y="341" width="4" height="16" fill="#c0c0c0"/><rect x="544.4" y="371.25" width="9.2" height="3.5" fill="#c0c0c0" transform="rotate(45 549 373)"/><rect x="565" y="379" width="16" height="4" fill="#c0c0c0"/><rect x="597" y="379" width="16" height="4" fill="#c0c0c0"/><rect x="629" y="379" width="16" height="4" fill="#c0c0c0"/><rect x="576.4" y="307.25" width="9.2" height="3.5" fill="#c0c0c0" transform="rotate(45 581 309)"/><rect x="597" y="315" width="16" height="4" fill="#c0c0c0"/><rect x="629" y="315" width="16" height="4" fill="#c0c0c0"/><rect x="576.4" y="339.25" width="9.2" height="3.5" fill="#c0c0c0" transform="rotate(45 581 341)"/><rect x="597" y="347" width="16" height="4" fill="#c0c0c0"/><rect x="624.4" y="355.25" width="9.2" height="3.5" fill="#c0c0c0" transform="rotate(45 629 357)"/><rect x="544.4" y="467.25" width="9.2" height="3.5" fill="#c0c0c0" transform="rotate(45 549 469)"/><rect x="560.4" y="483.25" width="9.2" height="3.5" fill="#c0c0c0" transform="rotate(45 565 485)"/><rect x="576.4" y="499.25" width="9.2" height="3.5" fill="#c0c0c0" transform="rotate(45 581 501)"/><rect x="592.4" y="515.25" width="9.2" height="3.5" fill="#c0c0c0" transform="rotate(45 597 517)"/><rect x="608.4" y="531.25" width="9.2" height="3.5" fill="#c0c0c0" transform="rotate(45 613 533)"/><rect x="624.4" y="547.25" width="9.2" height="3.5" fill="#c0c0c0" transform="rotate(45 629 549)"/><rect x="608.4" y="467.25" width="9.2" height="3.5" fill="#c0c0c0" transform="rotate(45 613 469)"/><rect x="624.4" y="483.25" width="9.2" height="3.5" fill="#c0c0c0" transform="rotate(45 629 485)"/><path d="M588.800 434.600l2.900 3.300h5M581.600 450.800h3.400l3.200 3.400" fill="none" stroke="#000" stroke-width="1.500"/><rect x="397" y="121" width="32" height="8" fill="#000"/><rect x="405" y="123" width="3" height="4" fill="#c0c0c0"/><rect x="418" y="123" width="3" height="4" fill="#c0c0c0"/><circle cx="413" cy="125" r="4.600" fill="#00ff00" stroke="#000" stroke-width="1"/><rect x="397" y="153" width="32" height="8" fill="#000"/><rect x="405" y="155" width="3" height="4" fill="#c0c0c0"/><rect x="418" y="155" width="3" height="4" fill="#c0c0c0"/><circle cx="413" cy="157" r="4.600" fill="#00ff00" stroke="#000" stroke-width="1"/></svg>
<span class="t" id="t49" style="top:1012px;line-height:16px;left:8.00px;letter-spacing:-0.669px;">Server</span>
<span class="t" id="t50" style="top:1012px;line-height:16px;left:371.50px;letter-spacing:-0.266px;">Centrale</span>
<div style="left:8px;top:1028px;width:359px;height:36px;background:#fff;border:1px solid #adadad;box-sizing:border-box;"></div>
<div style="left:349px;top:1030px;width:17px;height:32px;background:#f0f0f0;"></div>
<svg style="left:349px;top:1030px" width="17" height="32" fill="none" stroke="#505050" stroke-width="2"><path d="M5 10l3.500-3.500 3.500 3.500M5 22l3.500 3.500 3.500-3.500"/></svg>
<span class="t" id="t51" style="top:1030px;line-height:16px;color:#6d6d6d;left:11.50px;letter-spacing:-0.142px;">13:13:17 9999 could not initialize [COM3], check settings and</span>
<span class="t" id="t52" style="top:1045px;line-height:16px;color:#6d6d6d;left:11.50px;">device permission (group dialout)</span>
<div style="left:371px;top:1028px;width:1560px;height:36px;background:#fff;border:1px solid #adadad;box-sizing:border-box;"></div>
<div style="left:1910px;top:1030px;width:10px;height:32px;background:#f0f0f0;"></div>
<svg style="left:1910px;top:1030px" width="10" height="32" fill="none" stroke="#bfbfbf" stroke-width="2"><path d="M4.500 10l3.500-3.500 3.500 3.500M4.500 22l3.500 3.500 3.500-3.500"/></svg>
<div style="left:397px;top:1066px;width:1px;height:12px;background:#d7d7d7;"></div>
<div style="left:787px;top:1066px;width:1px;height:12px;background:#d7d7d7;"></div>
<div style="left:1178px;top:1066px;width:1px;height:12px;background:#d7d7d7;"></div>
<div style="left:1568px;top:1066px;width:1px;height:12px;background:#d7d7d7;"></div>
<div style="left:1739px;top:1066px;width:1px;height:12px;background:#d7d7d7;"></div>
<span class="t" id="t53" style="top:1069px;line-height:16px;left:402.00px;letter-spacing:0.047px;">localhost:8051</span>
<span class="t" id="t54" style="top:1069px;line-height:16px;left:1186.00px;letter-spacing:-0.599px;">0.0V 0.00A</span>
<span class="t" id="t55" style="top:1069px;line-height:16px;left:1577.50px;letter-spacing:-1.008px;">13:13</span>
<svg style="left:1768px;top:1066px" width="130" height="14" viewBox="1768 1066 130 14" fill="none" stroke-width="1.600"><circle cx="1777" cy="1075.600" r="5.700" stroke="#8bc34a"/><circle cx="1794" cy="1075.600" r="5.700" stroke="#f4434a"/><path d="M1790 1071.6l8 8" stroke="#f4434a"/><circle cx="1811" cy="1075.600" r="5.700" stroke="#f4434a"/><path d="M1807 1071.6l8 8" stroke="#f4434a"/><circle cx="1828" cy="1075.600" r="5.700" stroke="#f4434a"/><path d="M1824 1071.6l8 8" stroke="#f4434a"/><circle cx="1845" cy="1075.600" r="5.700" stroke="#f4434a"/><path d="M1841 1071.6l8 8" stroke="#f4434a"/><circle cx="1862" cy="1075.600" r="5.700" stroke="#f4434a"/><path d="M1858 1071.6l8 8" stroke="#f4434a"/><circle cx="1879" cy="1075.600" r="5.700" stroke="#8bc34a"/></svg>
<div style="left:0px;top:1078px;width:1920px;height:2px;background:#2a2a2a;"></div>
<div style="left:851px;top:1078px;width:36px;height:2px;background:#6a6a6a;"></div>
<div style="left:624px;top:257px;width:553px;height:462px;background:#f0f0f0;box-shadow:0 2px 14px 1px rgba(0,0,0,.38),0 0 0 1px rgba(120,120,120,.55);"></div>
<div style="left:624px;top:257px;width:553px;height:30px;background:#fff;"></div>
<span class="t" id="t56" style="top:264px;line-height:16px;color:#999;left:632.50px;letter-spacing:-0.271px;">Rocrail Eigenschappen</span>
<svg style="left:1050px;top:262px" width="120" height="20" fill="none" stroke-width="1"><path d="M7 9.500h10" stroke="#ddd"/><rect x="53.500" y="4.500" width="9" height="9" stroke="#777"/><path d="M99 4l10 10M109 4l-10 10" stroke="#777"/></svg>
<div style="left:631px;top:295px;width:66px;height:20px;background:#f0f0f0;border:1px solid #d9d9d9;box-sizing:border-box;"></div>
<span class="t" id="t57" style="top:297px;line-height:16px;left:637.25px;letter-spacing:-0.100px;">Algemeen</span>
<div style="left:696px;top:295px;width:49px;height:20px;background:#f0f0f0;border:1px solid #d9d9d9;box-sizing:border-box;"></div>
<span class="t" id="t58" style="top:297px;line-height:16px;left:703.00px;letter-spacing:-0.559px;">Trace</span>
<div style="left:744px;top:295px;width:57px;height:20px;background:#f0f0f0;border:1px solid #d9d9d9;box-sizing:border-box;"></div>
<span class="t" id="t59" style="top:297px;line-height:16px;left:751.25px;letter-spacing:-0.044px;">Netwerk</span>
<div style="left:800px;top:295px;width:48px;height:20px;background:#f0f0f0;border:1px solid #d9d9d9;box-sizing:border-box;"></div>
<span class="t" id="t60" style="top:297px;line-height:16px;left:807.25px;letter-spacing:0.188px;">Auto</span>
<div style="left:906px;top:295px;width:49px;height:20px;background:#f0f0f0;border:1px solid #d9d9d9;box-sizing:border-box;"></div>
<span class="t" id="t61" style="top:297px;line-height:16px;left:911.00px;letter-spacing:-0.738px;">R2Rnet</span>
<div style="left:954px;top:295px;width:57px;height:20px;background:#f0f0f0;border:1px solid #d9d9d9;box-sizing:border-box;"></div>
<span class="t" id="t62" style="top:297px;line-height:16px;left:960.30px;letter-spacing:-0.479px;">RocWeb</span>
<div style="left:1010px;top:295px;width:48px;height:20px;background:#f0f0f0;border:1px solid #d9d9d9;box-sizing:border-box;"></div>
<span class="t" id="t63" style="top:297px;line-height:16px;left:1016.00px;letter-spacing:-0.203px;">Finder</span>
<div style="left:1057px;top:295px;width:84px;height:20px;background:#f0f0f0;border:1px solid #d9d9d9;box-sizing:border-box;"></div>
<span class="t" id="t64" style="top:297px;line-height:16px;left:1064.20px;letter-spacing:0.166px;">Commando t</span>
<div style="left:629px;top:314px;width:541px;height:366px;background:#fff;border:1px solid #d9d9d9;box-sizing:border-box;"></div>
<div style="left:847px;top:292px;width:60px;height:23px;background:#fff;border:1px solid #d9d9d9;box-sizing:border-box;border-bottom:none;"></div>
<span class="t" id="t65" style="top:295px;line-height:16px;left:855.50px;letter-spacing:-0.237px;">Centrale</span>
<div style="left:1134px;top:294px;width:37px;height:20px;background:#f0f0f0;"></div>
<div style="left:1135px;top:294.5px;width:17.5px;height:17.5px;background:#f0f0f0;border:1px solid #adadad;box-sizing:border-box;"></div>
<svg style="left:1135px;top:294.500px" width="17.500" height="17.500" fill="#000"><path d="M10.200 5.500v6.400l-3.600-3.200z"/></svg>
<div style="left:1152.5px;top:294.5px;width:17.5px;height:17.5px;background:#f0f0f0;border:1px solid #adadad;box-sizing:border-box;"></div>
<svg style="left:1152.5px;top:294.500px" width="17.500" height="17.500" fill="#000"><path d="M7.300 5.500v6.400l3.600-3.200z"/></svg>
<div style="left:633px;top:317px;width:535px;height:360px;background:#fff;"></div>
<div style="left:633px;top:317px;width:534px;height:359px;background:#a0a0a0;"></div>
<div style="left:634px;top:318px;width:533px;height:358px;background:#e3e3e3;"></div>
<div style="left:634px;top:318px;width:532px;height:357px;background:#696969;"></div>
<div style="left:635px;top:319px;width:531px;height:356px;background:#fff;"></div>
<div style="left:635px;top:319px;width:531px;height:356px;overflow:hidden">
<div style="left:5px;top:4px;width:560px;height:104px;background:#fff;border:1px solid #828790;box-sizing:border-box;"></div>
<div style="left:7px;top:30px;width:556px;height:19px;background:#d9d9d9;"></div>
<div style="left:167px;top:5px;width:1px;height:102px;background:#e0e8f0;"></div>
<div style="left:225px;top:5px;width:1px;height:102px;background:#e0e8f0;"></div>
<div style="left:300px;top:5px;width:1px;height:102px;background:#e0e8f0;"></div>
<div style="left:351px;top:5px;width:1px;height:102px;background:#e0e8f0;"></div>
<div style="left:420px;top:5px;width:1px;height:102px;background:#e0e8f0;"></div>
<div style="left:463px;top:5px;width:1px;height:102px;background:#e0e8f0;"></div>
<span class="t" id="t66" style="top:10px;line-height:16px;left:13.50px;letter-spacing:-0.276px;">Interface ID</span>
<span class="t" id="t67" style="top:10px;line-height:16px;left:174.60px;letter-spacing:-0.308px;">Centrale</span>
<span class="t" id="t68" style="top:10px;line-height:16px;left:232.00px;letter-spacing:-0.103px;">Sub-Library</span>
<span class="t" id="t69" style="top:10px;line-height:16px;left:307.60px;letter-spacing:-0.439px;">Toestel</span>
<span class="t" id="t70" style="top:10px;line-height:16px;left:358.50px;letter-spacing:-0.115px;">Hostnaam</span>
<span class="t" id="t71" style="top:10px;line-height:16px;left:427.40px;letter-spacing:-0.022px;">Poort</span>
<span class="t" id="t72" style="top:10px;line-height:16px;left:470.20px;letter-spacing:0.118px;">Beschrijving</span>
<span class="t" id="t73" style="top:32px;line-height:16px;left:13.50px;letter-spacing:-0.226px;">DCC-EX Command Station 5</span>
<span class="t" id="t74" style="top:32px;line-height:16px;left:174.60px;letter-spacing:0.067px;">dccpp</span>
<span class="t" id="t75" style="top:32px;line-height:16px;left:232.00px;letter-spacing:-0.377px;">serial</span>
<span class="t" id="t76" style="top:32px;line-height:16px;left:307.60px;letter-spacing:-0.491px;">COM3</span>
<span class="t" id="t77" style="top:32px;line-height:16px;left:427.40px;">0</span>
<span class="t" id="t78" style="top:121px;line-height:16px;left:5.25px;letter-spacing:-0.334px;">Interface ID @</span>
<div style="left:89px;top:118px;width:120px;height:23px;background:#fff;border:1px solid #7a7a7a;box-sizing:border-box;"></div>
<div style="left:90px;top:119px;width:118px;height:21px;overflow:hidden;"></div>
<span class="t" id="t79" style="top:121px;line-height:16px;left:95.40px;letter-spacing:-0.335px;">DCC-EX Command S</span>
<span class="t" id="t80" style="top:121px;line-height:16px;left:219.40px;letter-spacing:-0.248px;">Beschrijving @</span>
<div style="left:307px;top:118px;width:300px;height:23px;background:#fff;border:1px solid #7a7a7a;box-sizing:border-box;"></div>
<div style="left:5px;top:154px;width:620px;height:46px;border:1px solid #dcdcdc;box-sizing:border-box;"></div>
<div style="left:11px;top:149px;width:49px;height:10px;background:#fff;"></div>
<span class="t" id="t81" style="top:146px;line-height:16px;left:14.40px;letter-spacing:-0.531px;">Bewaker</span>
<span class="t" id="t82" style="top:171px;line-height:16px;color:#a5a5a5;left:15.40px;letter-spacing:-0.194px;">Interval</span>
<span class="t" id="t83" style="top:171px;line-height:16px;color:#a5a5a5;left:127.50px;letter-spacing:-0.355px;">Node ID</span>
<span class="t" id="t84" style="top:171px;line-height:16px;color:#a5a5a5;left:310.10px;letter-spacing:-0.490px;">Adres</span>
<span class="t" id="t85" style="top:171px;line-height:16px;color:#a5a5a5;left:413.30px;">Poort</span>
<div style="left:180px;top:168px;width:120px;height:23px;background:#f0f0f0;border:1px solid #d4d4d4;box-sizing:border-box;"></div>
<span class="t" id="t86" style="top:171px;line-height:16px;color:#8a93a0;left:185.90px;">0</span>
<div style="left:59px;top:168px;width:58px;height:23px;background:#fff;border:1px solid #7a7a7a;box-sizing:border-box;"></div>
<div style="left:100px;top:168px;width:17px;height:23px;background:#fff;border:1px solid #c8c8c8;box-sizing:border-box;border-left:none;"></div>
<div style="left:100px;top:169px;width:16px;height:21px;background:#fff;"></div>
<div style="left:101px;top:169px;width:15px;height:10px;background:#f0f0f0;border:1px solid #dadada;box-sizing:border-box;"></div>
<div style="left:101px;top:180px;width:15px;height:10px;background:#f0f0f0;border:1px solid #dadada;box-sizing:border-box;"></div>
<svg style="left:100px;top:168px" width="17" height="23" fill="#303030"><path d="M5.800 7.4l2.700-2.800 2.700 2.800zM5.800 15.6l2.700 2.800 2.700-2.800z"/></svg>
<span class="t" id="t87" style="top:171px;line-height:16px;left:65.25px;">0</span>
<div style="left:345px;top:168px;width:58px;height:23px;background:#fff;border:1px solid #7a7a7a;box-sizing:border-box;"></div>
<div style="left:386px;top:168px;width:17px;height:23px;background:#fff;border:1px solid #c8c8c8;box-sizing:border-box;border-left:none;"></div>
<div style="left:386px;top:169px;width:16px;height:21px;background:#fff;"></div>
<div style="left:387px;top:169px;width:15px;height:10px;background:#f0f0f0;border:1px solid #dadada;box-sizing:border-box;"></div>
<div style="left:387px;top:180px;width:15px;height:10px;background:#f0f0f0;border:1px solid #dadada;box-sizing:border-box;"></div>
<svg style="left:386px;top:168px" width="17" height="23" fill="#303030"><path d="M5.800 7.4l2.700-2.800 2.700 2.800zM5.800 15.6l2.700 2.800 2.700-2.800z"/></svg>
<span class="t" id="t88" style="top:171px;line-height:16px;left:351.20px;">0</span>
<div style="left:447px;top:168px;width:58px;height:23px;background:#fff;border:1px solid #7a7a7a;box-sizing:border-box;"></div>
<div style="left:488px;top:168px;width:17px;height:23px;background:#fff;border:1px solid #c8c8c8;box-sizing:border-box;border-left:none;"></div>
<div style="left:488px;top:169px;width:16px;height:21px;background:#fff;"></div>
<div style="left:489px;top:169px;width:15px;height:10px;background:#f0f0f0;border:1px solid #dadada;box-sizing:border-box;"></div>
<div style="left:489px;top:180px;width:15px;height:10px;background:#f0f0f0;border:1px solid #dadada;box-sizing:border-box;"></div>
<svg style="left:488px;top:168px" width="17" height="23" fill="#303030"><path d="M5.800 7.4l2.700-2.800 2.700 2.800zM5.800 15.6l2.700 2.800 2.700-2.800z"/></svg>
<span class="t" id="t89" style="top:171px;line-height:16px;left:453.20px;">0</span>
<div style="left:515px;top:173px;width:13px;height:13px;background:#fff;border:1px solid #cccccc;box-sizing:border-box;"></div>
<div style="left:5px;top:212px;width:13px;height:13px;background:#fff;border:1px solid #333333;box-sizing:border-box;"></div>
<span class="t" id="t90" style="top:211px;line-height:16px;left:21.25px;letter-spacing:-0.036px;">Negeer booster commandos</span>
<div style="left:188px;top:212px;width:13px;height:13px;background:#fff;border:1px solid #333333;box-sizing:border-box;"></div>
<span class="t" id="t91" style="top:211px;line-height:16px;left:204.50px;letter-spacing:-0.053px;">Geen spanning uit bij spook detectie</span>
<div style="left:412px;top:212px;width:13px;height:13px;background:#fff;border:1px solid #333333;box-sizing:border-box;"></div>
<span class="t" id="t92" style="top:211px;line-height:16px;left:428.40px;letter-spacing:-0.169px;">Virtueel</span>
<div style="left:484px;top:212px;width:13px;height:13px;background:#fff;border:1px solid #333333;box-sizing:border-box;"></div>
<span class="t" id="t93" style="top:211px;line-height:16px;left:500.10px;letter-spacing:-0.807px;">Verwiss</span>
<div style="left:11px;top:242px;width:81px;height:21px;background:#e1e1e1;border:1px solid #adadad;box-sizing:border-box;"></div>
<span class="t" id="t94" style="top:245px;line-height:16px;left:21.25px;letter-spacing:-0.220px;">Verwijderen</span>
<div style="left:104px;top:242px;width:99px;height:21px;background:#e1e1e1;border:1px solid #adadad;box-sizing:border-box;"></div>
<span class="t" id="t95" style="top:245px;line-height:16px;left:113.60px;letter-spacing:-0.245px;">Eigenschappen</span>
<div style="left:215px;top:242px;width:73px;height:21px;background:#e1e1e1;border:1px solid #adadad;box-sizing:border-box;"></div>
<span class="t" id="t96" style="top:245px;line-height:16px;left:223.80px;">Standaard</span>
<div style="left:300px;top:242px;width:73px;height:21px;background:#e1e1e1;border:1px solid #adadad;box-sizing:border-box;"></div>
<span class="t" id="t97" style="top:245px;line-height:16px;left:315.16px;">wijzigen</span>
<div style="left:5px;top:286px;width:204px;height:47px;border:1px solid #dcdcdc;box-sizing:border-box;"></div>
<div style="left:11px;top:281px;width:39px;height:10px;background:#fff;"></div>
<span class="t" id="t98" style="top:279px;line-height:16px;left:14.50px;letter-spacing:0.035px;">Nieuw</span>
<div style="left:15px;top:301px;width:95px;height:23px;background:#fff;border:1px solid #7a7a7a;box-sizing:border-box;"></div>
<span class="t" id="t99" style="top:304px;line-height:16px;left:21.20px;letter-spacing:0.081px;">virtual</span>
<svg style="left:94px;top:308px" width="14" height="10" fill="none" stroke="#444" stroke-width="1.200"><path d="M3 2.500l4 4 4-4"/></svg>
<div style="left:121px;top:302px;width:77px;height:21px;background:#e1e1e1;border:1px solid #adadad;box-sizing:border-box;"></div>
<span class="t" id="t100" style="top:305px;line-height:16px;left:131.25px;letter-spacing:-0.277px;">Toevoegen</span>
<div style="left:219px;top:290px;width:400px;height:39px;border:1px solid #dcdcdc;box-sizing:border-box;"></div>
<div style="left:225px;top:285px;width:47px;height:10px;background:#fff;"></div>
<span class="t" id="t101" style="top:283px;line-height:16px;left:228.30px;">Options</span>
<div style="left:229px;top:306px;width:13px;height:13px;background:#fff;border:1px solid #333333;box-sizing:border-box;"></div>
<svg style="left:229px;top:306px" width="13" height="13" fill="none" stroke="#222" stroke-width="1.300"><path d="M2.800 6.600l2.700 2.800 5-5.800"/></svg>
<span class="t" id="t102" style="top:305px;line-height:16px;left:245.40px;letter-spacing:-0.028px;">Baanspanning uit bij afsluiten</span>
<div style="left:417px;top:306px;width:13px;height:13px;background:#fff;border:1px solid #333333;box-sizing:border-box;"></div>
<span class="t" id="t103" style="top:305px;line-height:16px;left:433.30px;letter-spacing:-0.116px;">Spanning aan bij op</span>
</div>
<div style="left:635px;top:659px;width:531px;height:15px;background:#f0f0f0;"></div>
<div style="left:652px;top:659px;width:347px;height:15px;background:#cdcdcd;"></div>
<svg style="left:635px;top:659px" width="531" height="15" fill="none" stroke="#505050" stroke-width="2"><path d="M10.5 4.0l-3.500 3.500 3.500 3.500M520.5 4.0l3.500 3.500-3.500 3.500"/></svg>
<div style="left:635px;top:674px;width:531px;height:1px;background:#fff;"></div>
<div style="left:630px;top:692px;width:146px;height:21px;background:#e1e1e1;border:1px solid #adadad;box-sizing:border-box;"></div>
<span class="t" id="t104" style="top:695px;line-height:16px;left:639.70px;letter-spacing:-0.070px;">Kopiëren naar klembord</span>
<div style="left:788px;top:692px;width:73px;height:21px;background:#e1e1e1;border:1px solid #adadad;box-sizing:border-box;"></div>
<span class="t" id="t105" style="top:695px;line-height:16px;left:815.82px;">&lt;/&gt;</span>
<div style="left:873px;top:692px;width:48px;height:21px;background:#e1e1e1;border:1px solid #adadad;box-sizing:border-box;"></div>
<span class="t" id="t106" style="top:695px;line-height:16px;left:884.66px;">ABC</span>
<div style="left:932px;top:692px;width:73px;height:21px;background:#e1e1e1;border:1px solid #adadad;box-sizing:border-box;"></div>
<span class="t" id="t107" style="top:695px;line-height:16px;left:959.83px;">OK</span>
<div style="left:1015px;top:692px;width:74px;height:21px;background:#e1e1e1;border:1px solid #adadad;box-sizing:border-box;"></div>
<span class="t" id="t108" style="top:695px;line-height:16px;left:1024.64px;">Annuleren</span>
<div style="left:1099px;top:692px;width:73px;height:21px;background:#e1e1e1;border:1px solid #adadad;box-sizing:border-box;"></div>
<span class="t" id="t109" style="top:695px;line-height:16px;left:1123.16px;">Help</span>
<svg style="left:1166.3px;top:708.7px" width="9" height="9" fill="#bfbfbf"><rect x="6.4" y="6.4" width="2" height="2"/><rect x="3.2" y="6.4" width="2" height="2"/><rect x="0" y="6.4" width="2" height="2"/><rect x="6.4" y="3.2" width="2" height="2"/><rect x="3.2" y="3.2" width="2" height="2"/><rect x="6.4" y="0" width="2" height="2"/></svg>
<div style="left:1228px;top:209px;width:481px;height:539px;background:#f0f0f0;box-shadow:0 3px 16px 2px rgba(0,0,0,.40),0 0 0 1px #555;"></div>
<div style="left:1228px;top:209px;width:481px;height:30px;background:#fff;"></div>
<span class="t" id="t110" style="top:216px;line-height:16px;left:1236.50px;letter-spacing:-0.429px;">DCC++</span>
<svg style="left:1688px;top:217px" width="12" height="12" fill="none" stroke="#000" stroke-width="1.100"><path d="M1 1l10 10M11 1l-10 10"/></svg>
<div style="left:1235px;top:247px;width:51px;height:20px;background:#f0f0f0;border:1px solid #d9d9d9;box-sizing:border-box;"></div>
<span class="t" id="t111" style="top:249px;line-height:16px;left:1241.40px;letter-spacing:-0.534px;">General</span>
<div style="left:1336px;top:247px;width:57px;height:20px;background:#f0f0f0;border:1px solid #d9d9d9;box-sizing:border-box;"></div>
<span class="t" id="t112" style="top:249px;line-height:16px;left:1341.50px;letter-spacing:-0.677px;">G-ASH02</span>
<div style="left:1233px;top:266px;width:469px;height:443px;background:#fff;border:1px solid #d9d9d9;box-sizing:border-box;"></div>
<div style="left:1285px;top:244px;width:52px;height:23px;background:#fff;border:1px solid #d9d9d9;box-sizing:border-box;border-bottom:none;"></div>
<span class="t" id="t113" style="top:247px;line-height:16px;left:1293.50px;letter-spacing:0.142px;">I/O</span>
<div style="left:1242px;top:273px;width:453px;height:30px;background:#f0f0f0;"></div>
<div style="left:1242px;top:273px;width:240px;height:30px;background:#f0f0f0;border:1px solid #a0a0a0;box-sizing:border-box;"></div>
<div style="left:1243px;top:274px;width:238px;height:1px;background:#fff;"></div>
<div style="left:1243px;top:274px;width:1px;height:28px;background:#fff;"></div>
<div style="left:1321px;top:274px;width:1px;height:28px;background:#a0a0a0;"></div>
<div style="left:1322px;top:274px;width:1px;height:28px;background:#fff;"></div>
<div style="left:1401px;top:274px;width:1px;height:28px;background:#a0a0a0;"></div>
<div style="left:1402px;top:274px;width:1px;height:28px;background:#fff;"></div>
<span class="t" id="t114" style="top:280px;line-height:16px;font-weight:bold;left:1268.65px;letter-spacing:-0.275px;">Type</span>
<span class="t" id="t115" style="top:280px;line-height:16px;font-weight:bold;left:1353.30px;letter-spacing:-0.836px;">Pin</span>
<span class="t" id="t116" style="top:280px;line-height:16px;font-weight:bold;left:1423.55px;letter-spacing:-0.169px;">Opties</span>
<div style="left:1242px;top:303px;width:80px;height:19px;background:#fff;border:2px solid #000;box-sizing:border-box;"></div>
<div style="left:1242px;top:322px;width:240px;height:19px;background:#0078d7;"></div>
<span class="t" id="t117" style="top:324px;line-height:16px;color:#fff;left:1244.30px;letter-spacing:0.367px;">input</span>
<span class="t" id="t118" style="top:324px;line-height:16px;color:#fff;left:1324.40px;letter-spacing:-1.166px;">820</span>
<span class="t" id="t119" style="top:324px;line-height:16px;color:#fff;left:1404.10px;letter-spacing:-1.144px;">0x01</span>
<span class="t" id="t120" style="top:343px;line-height:16px;left:1244.30px;letter-spacing:0.367px;">input</span>
<span class="t" id="t121" style="top:343px;line-height:16px;left:1324.40px;letter-spacing:-1.166px;">821</span>
<span class="t" id="t122" style="top:343px;line-height:16px;left:1404.10px;letter-spacing:-1.144px;">0x01</span>
<span class="t" id="t123" style="top:362px;line-height:16px;left:1244.30px;letter-spacing:0.367px;">input</span>
<span class="t" id="t124" style="top:362px;line-height:16px;left:1324.40px;letter-spacing:-1.166px;">822</span>
<span class="t" id="t125" style="top:362px;line-height:16px;left:1404.10px;letter-spacing:-1.144px;">0x01</span>
<span class="t" id="t126" style="top:381px;line-height:16px;left:1244.30px;letter-spacing:0.367px;">input</span>
<span class="t" id="t127" style="top:381px;line-height:16px;left:1324.40px;letter-spacing:-1.166px;">823</span>
<span class="t" id="t128" style="top:381px;line-height:16px;left:1404.10px;letter-spacing:-1.144px;">0x01</span>
<div style="left:1242px;top:570px;width:70px;height:64px;border:1px solid #dcdcdc;box-sizing:border-box;"></div>
<div style="left:1248px;top:565px;width:29px;height:10px;background:#fff;"></div>
<span class="t" id="t129" style="top:563px;line-height:16px;left:1251.50px;letter-spacing:-0.705px;">Type</span>
<svg style="left:1247px;top:587.2px" width="15" height="15" viewBox="0 0 15 15"><circle cx="7.500" cy="7.500" r="6" fill="#fff" stroke="#333" stroke-width="1"/><circle cx="7.500" cy="7.500" r="3.200" fill="#333"/></svg>
<span class="t" id="t130" style="top:588px;line-height:16px;left:1264.30px;letter-spacing:-0.141px;">Ingang</span>
<svg style="left:1247px;top:609.2px" width="15" height="15" viewBox="0 0 15 15"><circle cx="7.500" cy="7.500" r="6" fill="#fff" stroke="#333" stroke-width="1"/></svg>
<span class="t" id="t131" style="top:610px;line-height:16px;left:1264.30px;letter-spacing:-0.013px;">Uitgang</span>
<span class="t" id="t132" style="top:591px;line-height:16px;left:1322.50px;letter-spacing:-0.822px;">Pin</span>
<div style="left:1344px;top:587px;width:58px;height:23px;background:#fff;border:1px solid #7a7a7a;box-sizing:border-box;"></div>
<div style="left:1385px;top:587px;width:17px;height:23px;background:#fff;border:1px solid #c8c8c8;box-sizing:border-box;border-left:none;"></div>
<div style="left:1385px;top:588px;width:16px;height:21px;background:#fff;"></div>
<div style="left:1386px;top:588px;width:15px;height:10px;background:#f0f0f0;border:1px solid #dadada;box-sizing:border-box;"></div>
<div style="left:1386px;top:599px;width:15px;height:10px;background:#f0f0f0;border:1px solid #dadada;box-sizing:border-box;"></div>
<svg style="left:1385px;top:587px" width="17" height="23" fill="#303030"><path d="M5.800 7.4l2.700-2.800 2.700 2.800zM5.800 15.6l2.700 2.800 2.700-2.800z"/></svg>
<span class="t" id="t133" style="top:590px;line-height:16px;left:1349.90px;letter-spacing:-1.166px;">820</span>
<div style="left:1407px;top:565px;width:159px;height:69px;border:1px solid #dcdcdc;box-sizing:border-box;"></div>
<div style="left:1413px;top:560px;width:39px;height:10px;background:#fff;"></div>
<span class="t" id="t134" style="top:558px;line-height:16px;left:1416.40px;letter-spacing:-0.217px;">Opties</span>
<div style="left:1417px;top:576px;width:13px;height:13px;background:#fff;border:1px solid #333333;box-sizing:border-box;"></div>
<svg style="left:1417px;top:576px" width="13" height="13" fill="none" stroke="#222" stroke-width="1.300"><path d="M2.800 6.600l2.700 2.800 5-5.800"/></svg>
<span class="t" id="t135" style="top:575px;line-height:16px;left:1433.40px;">Geinverteerd / Pull-up</span>
<div style="left:1417px;top:596px;width:13px;height:13px;background:#fff;border:1px solid #333333;box-sizing:border-box;"></div>
<span class="t" id="t136" style="top:595px;line-height:16px;left:1433.40px;">Terugzetten</span>
<div style="left:1417px;top:616px;width:13px;height:13px;background:#fff;border:1px solid #333333;box-sizing:border-box;"></div>
<span class="t" id="t137" style="top:615px;line-height:16px;left:1433.40px;">Initiaal</span>
<div style="left:1243px;top:646px;width:77px;height:21px;background:#e1e1e1;border:1px solid #adadad;box-sizing:border-box;"></div>
<span class="t" id="t138" style="top:649px;line-height:16px;left:1253.25px;letter-spacing:-0.277px;">Toevoegen</span>
<div style="left:1332px;top:646px;width:73px;height:21px;background:#e1e1e1;border:1px solid #adadad;box-sizing:border-box;"></div>
<span class="t" id="t139" style="top:649px;line-height:16px;left:1347.16px;">wijzigen</span>
<div style="left:1417px;top:646px;width:81px;height:21px;background:#e1e1e1;border:1px solid #adadad;box-sizing:border-box;"></div>
<span class="t" id="t140" style="top:649px;line-height:16px;left:1427.25px;letter-spacing:-0.220px;">Verwijderen</span>
<div style="left:1243px;top:679px;width:73px;height:21px;background:#e1e1e1;border:1px solid #adadad;box-sizing:border-box;"></div>
<span class="t" id="t141" style="top:682px;line-height:16px;left:1263.16px;">Query</span>
<div style="left:1332px;top:679px;width:73px;height:21px;background:#e1e1e1;border:1px solid #adadad;box-sizing:border-box;"></div>
<span class="t" id="t142" style="top:682px;line-height:16px;left:1346.15px;">Opslaan</span>
<div style="left:1417px;top:679px;width:73px;height:21px;background:#e1e1e1;border:1px solid #adadad;box-sizing:border-box;"></div>
<span class="t" id="t143" style="top:682px;line-height:16px;left:1433.83px;">Wissen</span>
<div style="left:1459px;top:721px;width:73px;height:21px;background:#e1e1e1;border:1px solid #adadad;box-sizing:border-box;"></div>
<span class="t" id="t144" style="top:724px;line-height:16px;left:1486.83px;">OK</span>
<div style="left:1542px;top:721px;width:74px;height:21px;background:#e1e1e1;border:1px solid #adadad;box-sizing:border-box;"></div>
<span class="t" id="t145" style="top:724px;line-height:16px;left:1551.64px;">Annuleren</span>
<div style="left:1626px;top:721px;width:73px;height:21px;background:#e1e1e1;border:1px solid #adadad;box-sizing:border-box;"></div>
<span class="t" id="t146" style="top:724px;line-height:16px;left:1650.16px;">Help</span>
<svg style="left:1697.8px;top:737.6px" width="9" height="9" fill="#bfbfbf"><rect x="6.4" y="6.4" width="2" height="2"/><rect x="3.2" y="6.4" width="2" height="2"/><rect x="0" y="6.4" width="2" height="2"/><rect x="6.4" y="3.2" width="2" height="2"/><rect x="3.2" y="3.2" width="2" height="2"/><rect x="6.4" y="0" width="2" height="2"/></svg>
</body></html>
